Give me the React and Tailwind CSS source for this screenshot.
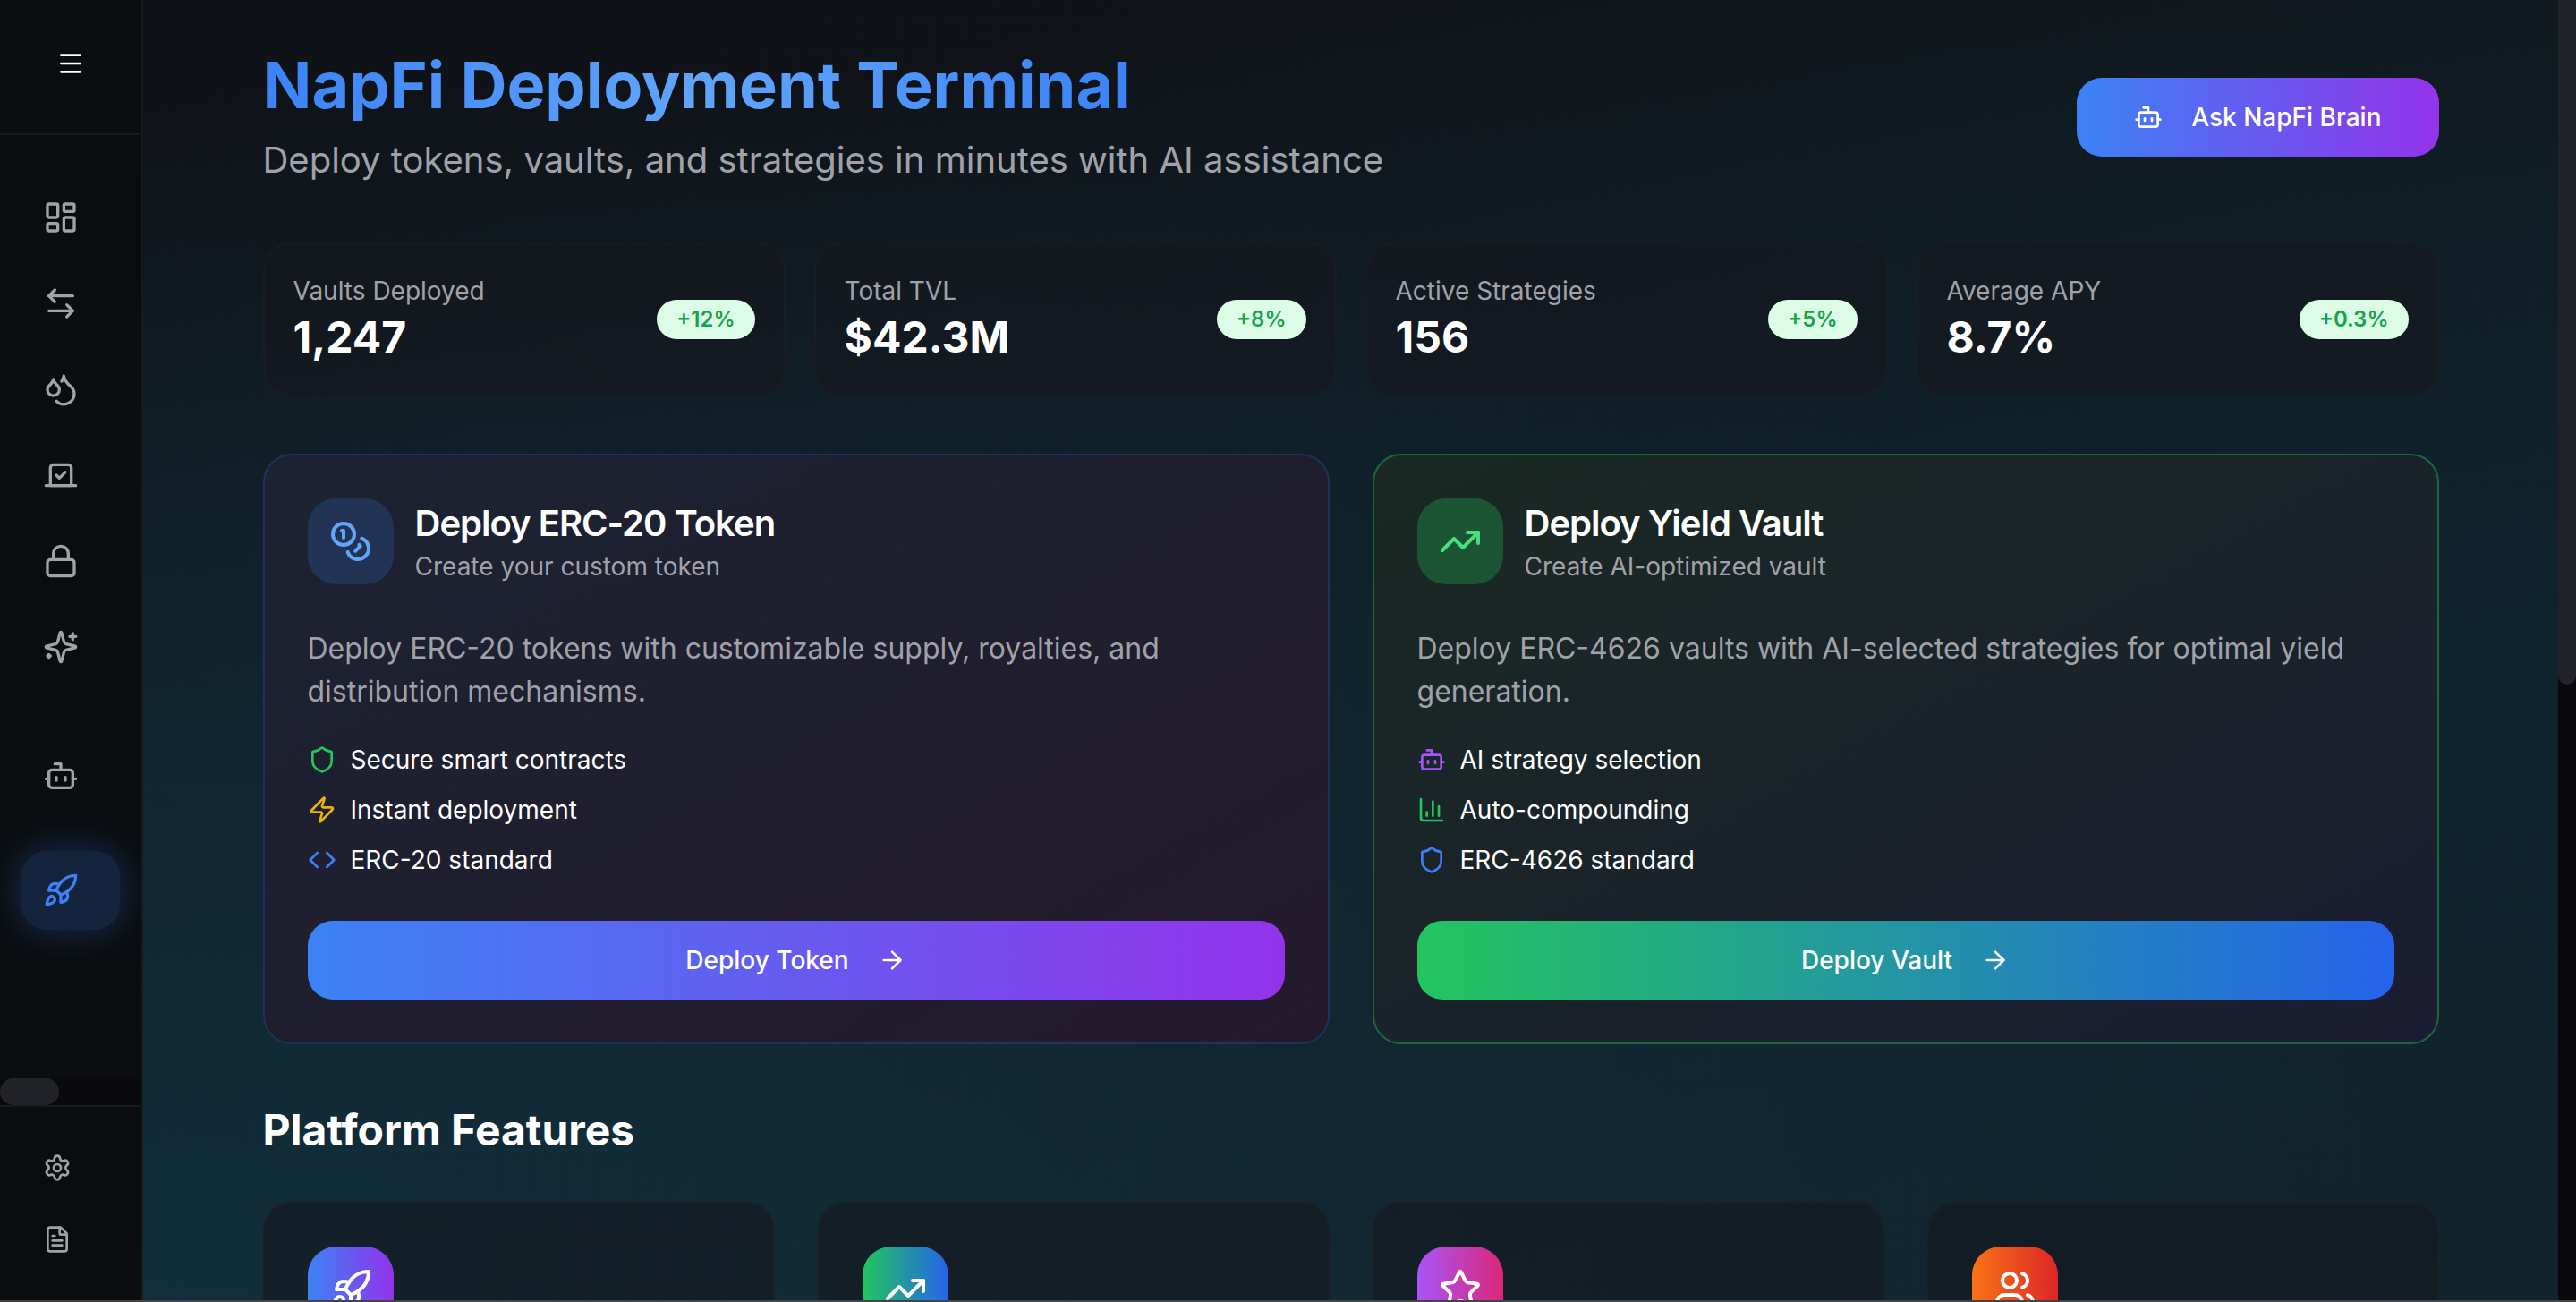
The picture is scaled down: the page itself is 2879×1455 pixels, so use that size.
import {
  ArrowLeftRight, ArrowRight, Bot, ChartColumn, Code, Coins, Droplets, FileText,
  LayoutDashboard, Lock, Menu, Rocket, Settings, Shield, Star,
  TrendingUp, Users, Vote, Zap,
} from "lucide-react";

function Sparkles({ className }) {
  return (
    <svg
      viewBox="0 0 24 24"
      fill="none"
      stroke="currentColor"
      strokeWidth="2"
      strokeLinecap="round"
      strokeLinejoin="round"
      className={className}
      aria-hidden="true"
    >
      <path d="M9.937 15.5A2 2 0 0 0 8.5 14.063l-6.135-1.582a.5.5 0 0 1 0-.962L8.5 9.936A2 2 0 0 0 9.937 8.5l1.582-6.135a.5.5 0 0 1 .963 0L14.063 8.5A2 2 0 0 0 15.5 9.937l6.135 1.581a.5.5 0 0 1 0 .964L15.5 14.063a2 2 0 0 0-1.437 1.437l-1.582 6.135a.5.5 0 0 1-.963 0z" />
      <path d="M20 3v4" />
      <path d="M22 5h-4" />
      <path d="M4 17v2" />
      <path d="M5 18H3" />
    </svg>
  );
}

const NAV = [
  { label: "Dashboard", icon: LayoutDashboard },
  { label: "Swap", icon: ArrowLeftRight },
  { label: "Liquidity", icon: Droplets },
  { label: "Governance", icon: Vote },
  { label: "Staking", icon: Lock },
  { label: "Discover", icon: Sparkles },
];

const STATS = [
  { label: "Vaults Deployed", value: "1,247", change: "+12%" },
  { label: "Total TVL", value: "$42.3M", change: "+8%" },
  { label: "Active Strategies", value: "156", change: "+5%" },
  { label: "Average APY", value: "8.7%", change: "+0.3%" },
];

const DEPLOY = [
  {
    title: "Deploy ERC-20 Token",
    subtitle: "Create your custom token",
    text: "Deploy ERC-20 tokens with customizable supply, royalties, and distribution mechanisms.",
    icon: Coins,
    card: "border-[#23305a] from-[#1c2332] via-[#1f1e2f] to-[#25192e]",
    tile: "bg-[#213456] text-[#60a5fa]",
    button: "from-[#3b82f6] to-[#9333ea]",
    action: "Deploy Token",
    points: [
      { icon: Shield, color: "text-[#22c55e]", text: "Secure smart contracts" },
      { icon: Zap, color: "text-[#eab308]", text: "Instant deployment" },
      { icon: Code, color: "text-[#3b82f6]", text: "ERC-20 standard" },
    ],
  },
  {
    title: "Deploy Yield Vault",
    subtitle: "Create AI-optimized vault",
    text: "Deploy ERC-4626 vaults with AI-selected strategies for optimal yield generation.",
    icon: TrendingUp,
    card: "border-[#1d653c] from-[#1a2923] via-[#1a232a] to-[#1b1c32]",
    tile: "bg-[#1c5534] text-[#4ade80]",
    button: "from-[#22c55e] to-[#2563eb]",
    action: "Deploy Vault",
    points: [
      { icon: Bot, color: "text-[#a855f7]", text: "AI strategy selection" },
      { icon: ChartColumn, color: "text-[#22c55e]", text: "Auto-compounding" },
      { icon: Shield, color: "text-[#3b82f6]", text: "ERC-4626 standard" },
    ],
  },
];

const FEATURES = [
  { icon: Rocket, tile: "from-[#3b82f6] to-[#9333ea]" },
  { icon: TrendingUp, tile: "from-[#22c55e] to-[#2563eb]" },
  { icon: Star, tile: "from-[#a855f7] to-[#db2777]" },
  { icon: Users, tile: "from-[#f97316] to-[#dc2626]" },
];

function NavItem({ label, icon: Icon }) {
  return (
    <a href="#" aria-label={label} className="flex h-22 items-center rounded-[28px] pl-6 text-[#a1a1aa]">
      <Icon className="size-10" />
    </a>
  );
}

function Sidebar() {
  return (
    <aside className="flex w-40 shrink-0 flex-col border-r-2 border-[#15181c] bg-[#0a0d10]">
      <div className="flex h-[151px] items-center justify-center border-b-2 border-[#15181c] pb-2">
        <button aria-label="Toggle menu" className="p-4 text-white">
          <Menu className="size-8" />
        </button>
      </div>
      <nav className="flex min-h-0 flex-1 flex-col px-6 pt-12">
        <div className="flex flex-col gap-2">
          {NAV.map((item) => <NavItem key={item.label} {...item} />)}
        </div>
        <div className="mt-14 flex flex-col gap-10">
          <NavItem label="NapFi Brain" icon={Bot} />
          <a
            href="#"
            aria-label="Deploy"
            aria-current="page"
            className="flex h-22 items-center rounded-[28px] bg-[#15243d] pl-6 text-[#3b82f6] shadow-[0_0_40px_rgba(59,130,246,0.3)]"
          >
            <Rocket className="size-10" />
          </a>
        </div>
      </nav>
      <div className="h-[30px] bg-[#09090d]">
        <div className="h-full w-[66px] rounded-full bg-[#222229]" />
      </div>
      <div className="flex h-[218px] flex-col gap-2 border-t-2 border-[#15181c] px-6 pt-8 text-[#a1a1aa]">
        <a href="#" aria-label="Settings" className="flex h-18 items-center pl-6"><Settings className="size-8" /></a>
        <a href="#" aria-label="Documentation" className="flex h-18 items-center pl-6"><FileText className="size-8" /></a>
      </div>
    </aside>
  );
}

function StatCard({ label, value, change }) {
  return (
    <div className="flex items-center justify-between rounded-[32px] border-2 border-[#1b1b22] bg-[#16171e]/60 bg-clip-padding p-8">
      <div>
        <p className="text-[28px] leading-10 text-[#a1a1aa]">{label}</p>
        <p className="text-5xl leading-16 font-bold">{value}</p>
      </div>
      <span className="rounded-full border-2 border-transparent bg-[#dcfce7] px-5 py-1 text-2xl leading-8 font-semibold text-[#16a34a]">
        {change}
      </span>
    </div>
  );
}

function DeployCard({ title, subtitle, text, icon: Icon, card, tile, button, action, points }) {
  return (
    <article className={`rounded-[32px] border-2 bg-linear-to-br/srgb bg-origin-border p-12 ${card}`}>
      <header className="flex items-center gap-6">
        <div className={`flex size-24 items-center justify-center rounded-[32px] ${tile}`}>
          <Icon className="size-12" />
        </div>
        <div>
          <h2 className="text-[40px] leading-14 font-semibold tracking-tight">{title}</h2>
          <p className="text-[28px] leading-10 text-[#a1a1aa]">{subtitle}</p>
        </div>
      </header>
      <p className="mt-12 text-[32px] leading-12 text-[#a1a1aa]">{text}</p>
      <ul className="mt-8 flex flex-col gap-4">
        {points.map(({ icon: PointIcon, color, text: point }) => (
          <li key={point} className="flex items-center gap-4 text-[28px] leading-10">
            <PointIcon className={`size-8 ${color}`} />
            {point}
          </li>
        ))}
      </ul>
      <button className={`mt-12 flex h-22 w-full items-center justify-center gap-8 rounded-[28px] bg-linear-to-r/srgb text-[28px] font-medium ${button}`}>
        {action}
        <ArrowRight className="size-8" />
      </button>
    </article>
  );
}

export default function App() {
  return (
    <div className="flex h-screen flex-col bg-[#0f1115] font-['Inter',sans-serif] text-white">
      <div className="flex min-h-0 flex-1">
        <Sidebar />
        <main className="min-w-0 flex-1 overflow-hidden bg-[radial-gradient(ellipse_at_0%_105%,#112f3d_0%,transparent_70%),radial-gradient(ellipse_at_105%_55%,#0f2430_0%,transparent_80%),linear-gradient(165deg,#0f1116_5%,#12232b_85%)]">
          <div className="mx-auto flex max-w-[2560px] flex-col gap-16 px-16 pt-[55px]">
            <header className="flex items-center justify-between">
              <div className="flex flex-col gap-4">
                <h1 className="self-start bg-linear-to-r/srgb from-[#3b82f6] via-[#60a5fa] to-[#3b82f6] bg-clip-text text-7xl leading-20 font-bold text-transparent">
                  NapFi Deployment Terminal
                </h1>
                <p className="text-[40px] leading-14 text-[#a1a1aa]">
                  Deploy tokens, vaults, and strategies in minutes with AI assistance
                </p>
              </div>
              <button className="flex h-22 items-center gap-8 rounded-[28px] bg-linear-to-r/srgb from-[#3b82f6] to-[#9333ea] px-16 text-[28px] font-medium">
                <Bot className="size-8" />
                Ask NapFi Brain
              </button>
            </header>
            <section aria-label="Platform statistics" className="grid grid-cols-4 gap-8">
              {STATS.map((stat) => <StatCard key={stat.label} {...stat} />)}
            </section>
            <section aria-label="Deploy" className="grid grid-cols-2 gap-12">
              {DEPLOY.map((item) => <DeployCard key={item.title} {...item} />)}
            </section>
            <section>
              <h2 className="text-5xl leading-16 font-bold">Platform Features</h2>
              <div className="mt-12 grid grid-cols-4 gap-12">
                {FEATURES.map(({ icon: Icon, tile }) => (
                  <div key={tile} className="h-80 rounded-[32px] border-2 border-[#1c1e26] bg-[#16171e]/60 bg-clip-padding p-12">
                    <div className={`flex size-24 items-center justify-center rounded-[32px] bg-linear-to-r/srgb ${tile}`}>
                      <Icon className="size-12" />
                    </div>
                  </div>
                ))}
              </div>
            </section>
          </div>
        </main>
        <div className="w-5 shrink-0 bg-[#09090d]">
          <div className="h-[765px] rounded-b-full bg-[#222229]" />
        </div>
      </div>
      <div className="h-0.5 bg-[#444444]" />
    </div>
  );
}
